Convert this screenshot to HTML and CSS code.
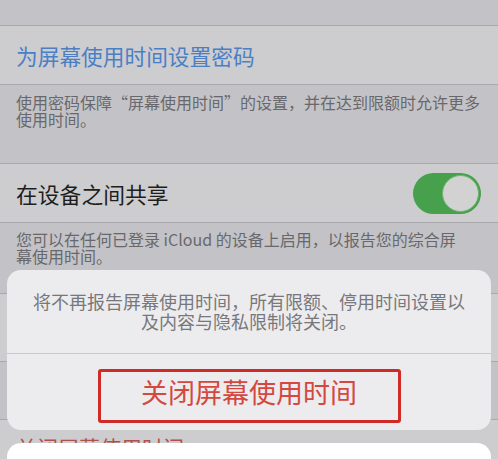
FILE: index.html
```html
<!DOCTYPE html>
<html lang="zh">
<head>
<meta charset="utf-8">
<link rel="stylesheet" href="styles.css">
</head>
<body>
<div class="page">
  <div class="top-gap"></div>
  <div class="row"><span class="link">为屏幕使用时间设置密码</span></div>
  <div class="note note-1"><p class="note-line">使用密码保障“屏幕使用时间”的设置，并在达到限额时允许更多</p><p class="note-line">使用时间。</p></div>
  <div class="row row-toggle">
    <span class="label">在设备之间共享</span>
    <span class="toggle"><span class="knob"></span></span>
  </div>
  <div class="note note-2"><p class="note-line">您可以在任何已登录 iCloud 的设备上启用，以报告您的综合屏</p><p class="note-line">幕使用时间。</p></div>
  <div class="row row-hidden"></div>
  <div class="mid-gap"></div>
  <div class="row row-danger"><span class="danger">关闭屏幕使用时间</span></div>

  <div class="sheet">
    <div class="sheet-msg"><p class="msg-line">将不再报告屏幕使用时间，所有限额、停用时间设置以</p><p class="msg-line">及内容与隐私限制将关闭。</p></div>
    <div class="sheet-action"><span class="action-text">关闭屏幕使用时间</span></div>
    <div class="highlight"></div>
  </div>
  <div class="cancel"></div>
</div>
</body>
</html>
```

FILE: styles.css
```css
html, body {
  margin: 0;
  padding: 0;
}
body {
  background: #c3c3c7;
  font-family: "Noto Sans CJK SC", "Noto Sans", sans-serif;
}
.page {
  position: relative;
  width: 498px;
  height: 459px;
  overflow: hidden;
  background: #c3c3c7;
}
.top-gap {
  height: 25px;
}
.row {
  box-sizing: border-box;
  height: 60px;
  background: #cdcdcf;
  border-top: 1px solid #a9a9ad;
  border-bottom: 1px solid #a9a9ad;
  padding: 0 17px 0 16px;
  display: flex;
  align-items: center;
}
.link {
  color: #4a7fc6;
  font-size: 21.7px;
}
.note {
  box-sizing: border-box;
  padding: 9px 16px 0 16px;
  font-size: 16px;
  color: #68686c;
  white-space: nowrap;
}
.note-line {
  margin: 0;
  height: 17px;
  line-height: 17px;
}
.note-1 {
  height: 78px;
}
.row-toggle {
  justify-content: space-between;
  height: 60px;
}
.label {
  color: #1e1e20;
  font-size: 21.8px;
}
.toggle {
  box-sizing: border-box;
  width: 68px;
  height: 41px;
  border-radius: 21px;
  background: #46a04c;
  display: flex;
  justify-content: flex-end;
  align-items: center;
  padding-right: 2px;
}
.knob {
  box-sizing: border-box;
  width: 37px;
  height: 37px;
  border-radius: 50%;
  background: #d2d2d2;
  border: 1px solid #6db570;
}
.note-2 {
  height: 70px;
  padding-top: 8px;
}
.row-hidden {
  height: 69px;
}
.mid-gap {
  height: 57px;
}
.row-danger {
  height: 60px;
  align-items: flex-start;
  padding-top: 15px;
  border-bottom: none;
}
.danger {
  color: #b0504a;
  font-size: 21px;
  line-height: 24px;
}
.sheet {
  position: absolute;
  left: 7px;
  top: 270px;
  width: 484px;
  height: 160px;
  border-radius: 14px;
  background: #ececee;
  display: flex;
  flex-direction: column;
}
.sheet-msg {
  box-sizing: border-box;
  height: 84px;
  padding-top: 21px;
  text-align: center;
  font-size: 18px;
  color: #78787c;
  border-bottom: 1px solid #c9c9cc;
  white-space: nowrap;
}
.msg-line {
  margin: 0;
  height: 20px;
  line-height: 20px;
}
.sheet-action {
  flex: 1;
  display: flex;
  align-items: center;
  justify-content: center;
}
.action-text {
  color: #d4483f;
  font-size: 27px;
  line-height: 34px;
}
.highlight {
  position: absolute;
  left: 91px;
  top: 99px;
  width: 303px;
  height: 54px;
  box-sizing: border-box;
  border: 3px solid #cf2b27;
  border-radius: 3px;
}
.cancel {
  position: absolute;
  left: 7px;
  top: 443px;
  width: 484px;
  height: 60px;
  border-radius: 14px;
  background: #ffffff;
}
```
